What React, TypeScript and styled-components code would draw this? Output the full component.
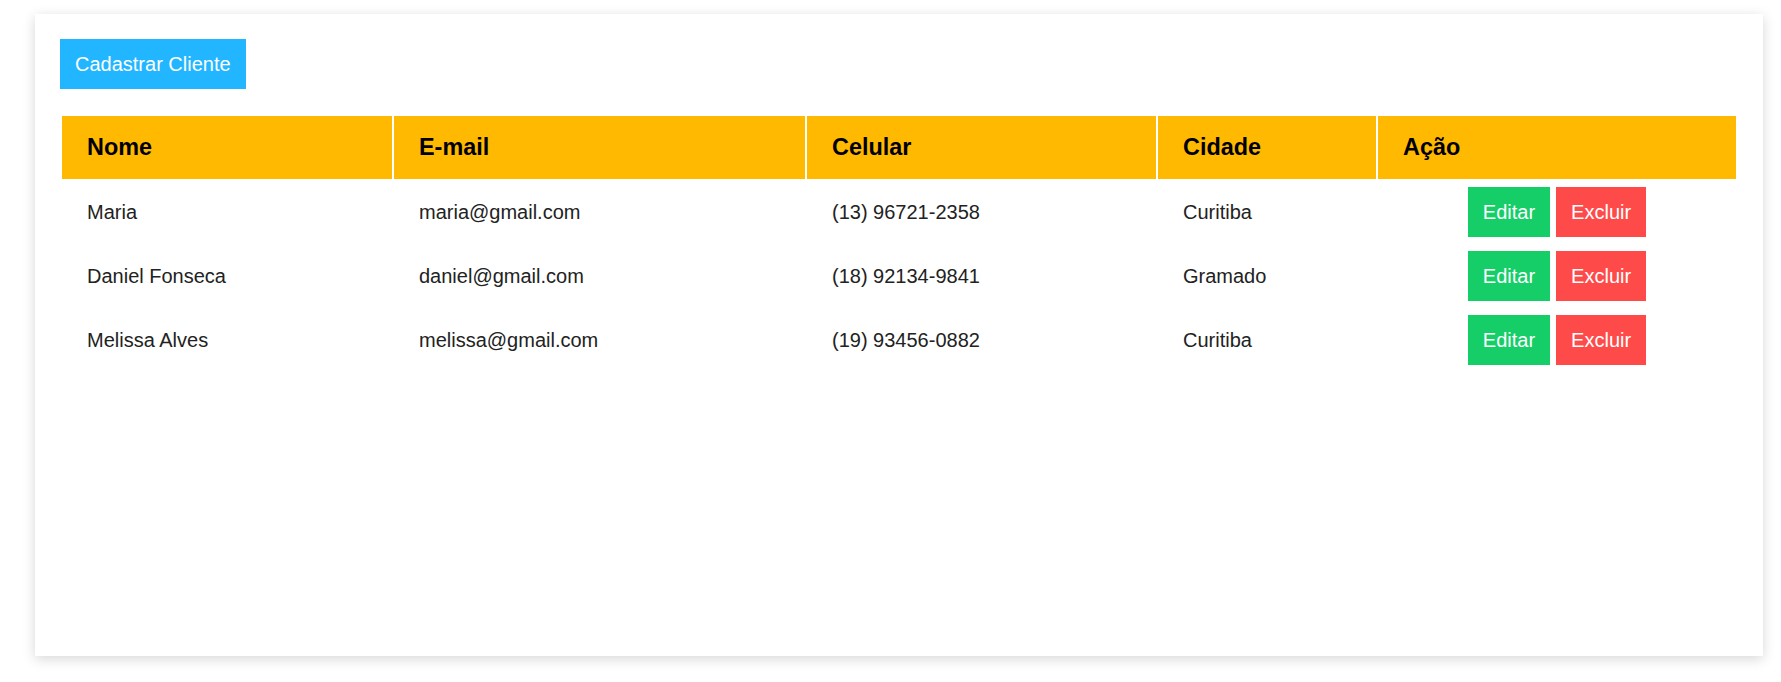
import styled, { createGlobalStyle } from 'styled-components';

interface ICliente {
  nome: string;
  email: string;
  celular: string;
  cidade: string;
}

const clientes: ICliente[] = [
  { nome: 'Maria', email: 'maria@gmail.com', celular: '(13) 96721-2358', cidade: 'Curitiba' },
  { nome: 'Daniel Fonseca', email: 'daniel@gmail.com', celular: '(18) 92134-9841', cidade: 'Gramado' },
  { nome: 'Melissa Alves', email: 'melissa@gmail.com', celular: '(19) 93456-0882', cidade: 'Curitiba' },
];

const colunas = [
  { label: 'Nome', width: 280 },
  { label: 'E-mail', width: 361 },
  { label: 'Celular', width: 299 },
  { label: 'Cidade', width: 168 },
  { label: 'Ação', width: 308 },
];

const GlobalStyle = createGlobalStyle`
  html, body {
    margin: 0;
    padding: 0;
    background: #ffffff;
    font-family: "Liberation Sans", Arial, sans-serif;
  }
`;

const Page = styled.div`
  padding: 14px 18px 26px 35px;
`;

const Card = styled.section`
  box-sizing: border-box;
  width: 1728px;
  height: 642px;
  padding: 25px;
  background: #ffffff;
  box-shadow: 0 3px 12px rgba(0, 0, 0, 0.16);
`;

const Button = styled.button<{ $color: string }>`
  border: none;
  border-radius: 0;
  margin: 0;
  padding: 13px 15px;
  background: ${({ $color }) => $color};
  color: #ffffff;
  font-family: "Liberation Sans", Arial, sans-serif;
  font-size: 20px;
  line-height: 24px;
  cursor: pointer;
`;

const Table = styled.table`
  margin-top: 25px;
  width: 1678px;
  border-collapse: separate;
  border-spacing: 2px;
  table-layout: fixed;
`;

const Th = styled.th<{ $width: number }>`
  width: ${({ $width }) => $width}px;
  padding: 18px 25px;
  background: #ffb900;
  color: #000000;
  font-size: 23.4px;
  font-weight: 700;
  text-align: left;
`;

const Td = styled.td`
  padding: 6px 25px;
  color: #222222;
  font-size: 20px;
  vertical-align: middle;
`;

const Actions = styled.div`
  display: flex;
  justify-content: center;
  gap: 6px;
`;

export default function App() {
  return (
    <>
      <GlobalStyle />
      <Page>
        <Card>
          <Button $color="#21b6ff">Cadastrar Cliente</Button>
          <Table>
            <thead>
              <tr>
                {colunas.map((c) => (
                  <Th key={c.label} $width={c.width}>
                    {c.label}
                  </Th>
                ))}
              </tr>
            </thead>
            <tbody>
              {clientes.map((cliente) => (
                <tr key={cliente.email}>
                  <Td>{cliente.nome}</Td>
                  <Td>{cliente.email}</Td>
                  <Td>{cliente.celular}</Td>
                  <Td>{cliente.cidade}</Td>
                  <Td>
                    <Actions>
                      <Button $color="#15ce68">Editar</Button>
                      <Button $color="#ff4a4a">Excluir</Button>
                    </Actions>
                  </Td>
                </tr>
              ))}
            </tbody>
          </Table>
        </Card>
      </Page>
    </>
  );
}
